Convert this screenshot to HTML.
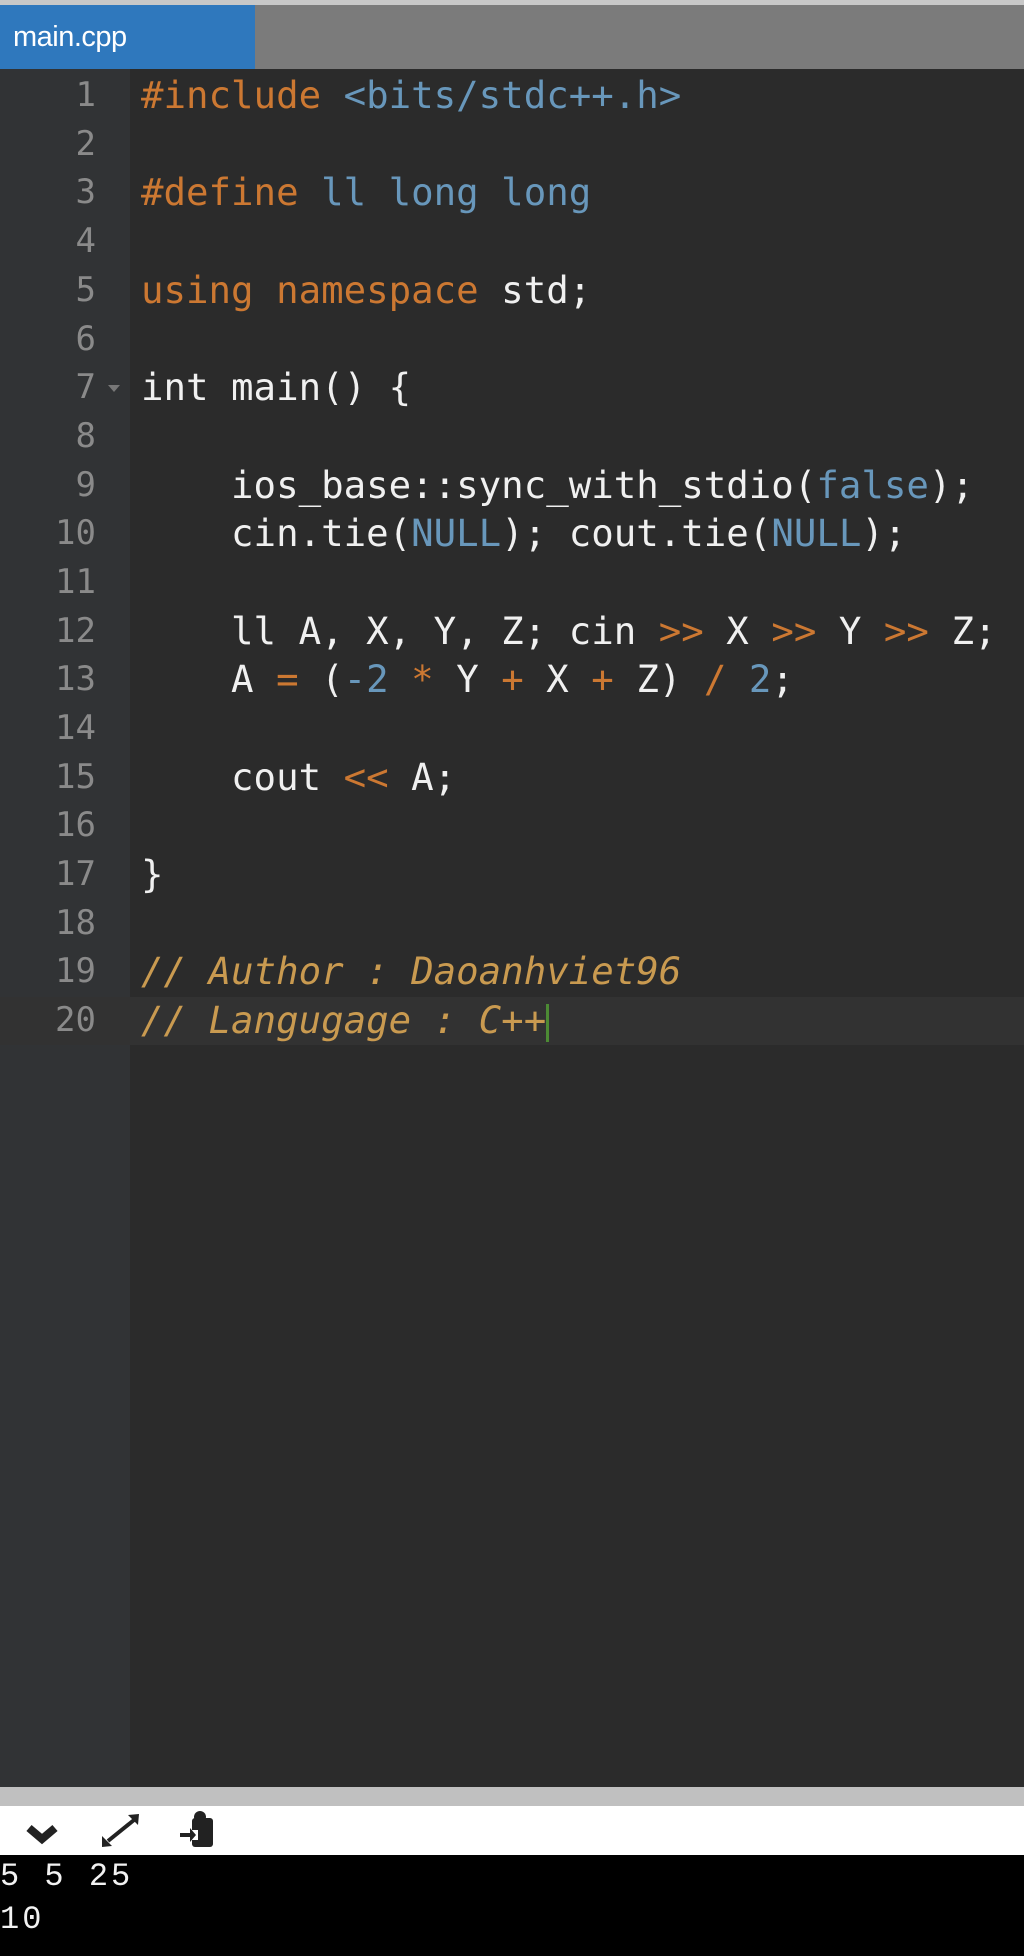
<!DOCTYPE html>
<html><head><meta charset="utf-8"><style>
html,body{margin:0;padding:0;width:1024px;height:1956px;overflow:hidden;background:#2b2b2b;font-family:"DejaVu Sans Mono","Liberation Mono",monospace}
#top{position:absolute;left:0;top:0;width:1024px;height:5px;background:#c8c8c8}
#tabbar{position:absolute;left:0;top:5px;width:1024px;height:64px;background:#7b7b7b}
#tab{position:absolute;left:0;top:0;width:255px;height:64px;background:#2f78bd;color:#fff;font-family:"Liberation Sans",sans-serif;font-size:29px;line-height:64px;padding-left:13px;box-sizing:border-box;letter-spacing:-0.5px}
#gutter{position:absolute;left:0;top:69px;width:130px;height:1718px;background:#313335}
#editor{position:absolute;left:130px;top:69px;width:894px;height:1718px;background:#2b2b2b}
#active{position:absolute;left:0;top:997px;width:1024px;height:48px;background:#323232}
.ln{position:absolute;left:0;width:96px;text-align:right;color:#8a8a8a;font-size:34px;line-height:48.7px}
.code{position:absolute;left:141px;white-space:pre;color:#f0f0f0;font-size:37.4px;line-height:48.7px}
.k{color:#cc7832}.b{color:#6897bb}.c{color:#c99a50;font-style:italic}
#fold{position:absolute;left:108px;top:385px;width:0;height:0;border-left:6px solid transparent;border-right:6px solid transparent;border-top:7px solid #777}
.cur{display:inline-block;width:3px;height:38px;background:#4c8a34;vertical-align:middle}
#gray{position:absolute;left:0;top:1787px;width:1024px;height:19px;background:#c0c0c0}
#tool{position:absolute;left:0;top:1806px;width:1024px;height:49px;background:#fff}
#out{position:absolute;left:0;top:1855px;width:1024px;height:101px;background:#000;color:#f2f2f2;font-family:"Liberation Mono",monospace;font-size:32px;letter-spacing:3px;line-height:43px;white-space:pre}
</style></head><body>
<div id="top"></div>
<div id="tabbar"><div id="tab">main.cpp</div></div>
<div id="gutter"></div><div id="editor"></div>
<div id="active"></div>
<div class="ln" style="top:71px">1</div>
<div class="ln" style="top:120px">2</div>
<div class="ln" style="top:168px">3</div>
<div class="ln" style="top:217px">4</div>
<div class="ln" style="top:266px">5</div>
<div class="ln" style="top:315px">6</div>
<div class="ln" style="top:363px">7</div>
<div class="ln" style="top:412px">8</div>
<div class="ln" style="top:461px">9</div>
<div class="ln" style="top:509px">10</div>
<div class="ln" style="top:558px">11</div>
<div class="ln" style="top:607px">12</div>
<div class="ln" style="top:655px">13</div>
<div class="ln" style="top:704px">14</div>
<div class="ln" style="top:753px">15</div>
<div class="ln" style="top:801px">16</div>
<div class="ln" style="top:850px">17</div>
<div class="ln" style="top:899px">18</div>
<div class="ln" style="top:947px">19</div>
<div class="ln" style="top:996px">20</div>
<div id="fold"></div>
<div class="code" style="top:71px"><span class="k">#include</span> <span class="b">&lt;bits/stdc++.h&gt;</span></div>
<div class="code" style="top:168px"><span class="k">#define</span> <span class="b">ll long long</span></div>
<div class="code" style="top:266px"><span class="k">using namespace</span> std;</div>
<div class="code" style="top:363px">int main() {</div>
<div class="code" style="top:461px">    ios_base::sync_with_stdio(<span class="b">false</span>);</div>
<div class="code" style="top:509px">    cin.tie(<span class="b">NULL</span>); cout.tie(<span class="b">NULL</span>);</div>
<div class="code" style="top:607px">    ll A, X, Y, Z; cin <span class="k">&gt;&gt;</span> X <span class="k">&gt;&gt;</span> Y <span class="k">&gt;&gt;</span> Z;</div>
<div class="code" style="top:655px">    A <span class="k">=</span> (<span class="b">-2</span> <span class="k">*</span> Y <span class="k">+</span> X <span class="k">+</span> Z) <span class="k">/</span> <span class="b">2</span>;</div>
<div class="code" style="top:753px">    cout <span class="k">&lt;&lt;</span> A;</div>
<div class="code" style="top:850px">}</div>
<div class="code" style="top:947px"><span class="c">// Author : Daoanhviet96</span></div>
<div class="code" style="top:996px"><span class="c">// Langugage : C++</span><span class="cur"></span></div>
<div id="gray"></div>
<div id="tool">
<svg width="260" height="49" viewBox="0 0 260 49">
<path d="M29 22 L42 33 L55 22" fill="none" stroke="#222" stroke-width="8" stroke-linejoin="miter"/>
<line x1="108" y1="35" x2="134" y2="14" stroke="#222" stroke-width="4"/>
<path d="M102 41 L102 30 L112 40 Z" fill="#222"/>
<path d="M139 8 L128 9 L138 19 Z" fill="#222"/>
<rect x="192" y="12" width="21" height="29" rx="3" fill="#222"/>
<circle cx="200" cy="11" r="6" fill="#222"/>
<rect x="190" y="24" width="8" height="10" fill="#fff"/>
<rect x="180" y="27" width="12" height="4" fill="#222"/>
<path d="M190 22 L196 29 L190 36 Z" fill="#222"/>
</svg>
</div>
<div id="out">5 5 25
10</div>
</body></html>
